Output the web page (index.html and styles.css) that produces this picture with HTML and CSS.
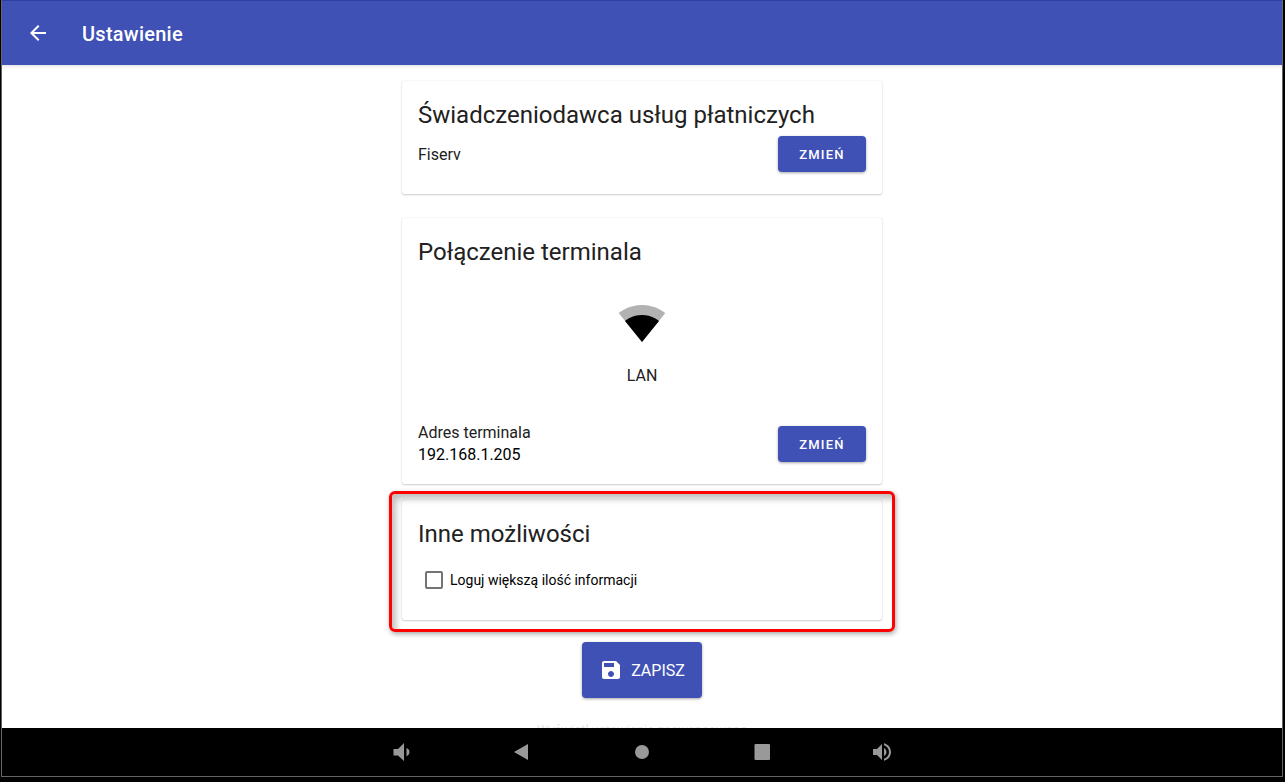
FILE: index.html
```html
<!DOCTYPE html>
<html lang="pl">
<head>
<meta charset="utf-8">
<meta name="viewport" content="width=device-width, initial-scale=1">
<title>Ustawienie</title>
<link rel="stylesheet" href="styles.css">
</head>
<body>
<div class="device">
  <header class="app-bar">
    <button class="icon-button" type="button" aria-label="Wstecz">
      <svg width="24" height="24" viewBox="0 0 24 24" fill="currentColor"><path d="M20 11H7.830l5.590-5.590L12 4l-8 8 8 8 1.410-1.410L7.830 13H20v-2z"/></svg>
    </button>
    <h1 class="app-title">Ustawienie</h1>
  </header>

  <main class="content">
    <form class="settings">
      <section class="card card-provider">
        <h2 class="card-title">Świadczeniodawca usług płatniczych</h2>
        <div class="row">
          <p class="body-text">Fiserv</p>
          <button class="button" type="button">ZMIEŃ</button>
        </div>
      </section>

      <section class="card card-connection">
        <h2 class="card-title">Połączenie terminala</h2>
        <div class="connection">
          <svg width="48" height="48" viewBox="0 0 48 48"><path fill="#b2b2b2" d="M24 43 47.300 14C46.400 13.300 37.500 6 24 6S1.600 13.300.700 14L24 43z"/><path fill="#000" d="M24 43 41 21.900C40.100 21.200 34 16 24 16S7.900 21.200 7 21.900L24 43z"/></svg>
          <p class="body-text">LAN</p>
        </div>
        <div class="row">
          <dl class="address">
            <dt class="address-label">Adres terminala</dt>
            <dd class="address-value">192.168.1.205</dd>
          </dl>
          <button class="button" type="button">ZMIEŃ</button>
        </div>
      </section>

      <div class="highlighted">
        <section class="card card-other">
          <h2 class="card-title">Inne możliwości</h2>
          <label class="check"><input class="check-box" type="checkbox">Loguj większą ilość informacji</label>
        </section>
        <div class="highlight"></div>
      </div>

      <button class="button save" type="button">
        <svg width="24" height="24" viewBox="0 0 24 24" fill="currentColor"><path d="M17 3H5c-1.110 0-2 .9-2 2v14c0 1.100.890 2 2 2h14c1.100 0 2-.9 2-2V7l-4-4zm-5 16c-1.660 0-3-1.340-3-3s1.340-3 3-3 3 1.340 3 3-1.340 3-3 3zm3-10H5V5h10v4z"/></svg>
        <span>ZAPISZ</span>
      </button>
      <a class="advanced" href="#advanced">Wyświetl ustawienia zaawansowane</a>
    </form>
  </main>

  <nav class="system-bar" aria-label="System">
    <button class="system-button" type="button" aria-label="Ciszej"><svg width="24" height="24" viewBox="0 0 24 24" fill="currentColor"><path d="M3.500 9v6.500H8l6 5.500V3L8 9H3.500zM16.500 8v8.200c1.900-.6 3-2.200 3-4.100s-1.100-3.500-3-4.100z"/></svg></button>
    <button class="system-button" type="button" aria-label="Wstecz"><svg width="24" height="24" viewBox="0 0 24 24" fill="currentColor"><path d="M4 12 18 4v16z"/></svg></button>
    <button class="system-button" type="button" aria-label="Ekran główny"><svg width="24" height="24" viewBox="0 0 24 24" fill="currentColor"><circle cx="12" cy="12" r="7"/></svg></button>
    <button class="system-button" type="button" aria-label="Ostatnie aplikacje"><svg width="24" height="24" viewBox="0 0 24 24" fill="currentColor"><rect x="4.500" y="4" width="15.500" height="16" rx="1"/></svg></button>
    <button class="system-button" type="button" aria-label="Głośniej"><svg width="24" height="24" viewBox="0 0 24 24" fill="currentColor"><path d="M3 9v6h4l5 5V4L7 9H3zm13.500 3c0-1.770-1.020-3.290-2.500-4.030v8.050c1.480-.730 2.500-2.250 2.500-4.020zM14 3.230v2.060c2.890.860 5 3.540 5 6.710s-2.110 5.850-5 6.710v2.060c4.010-.910 7-4.490 7-8.770s-2.990-7.860-7-8.770z"/></svg></button>
  </nav>
</div>
</body>
</html>
```
FILE: styles.css
```css
* {
  box-sizing: border-box;
}

body {
  margin: 0;
  background: #000;
  color: #212121;
  font-family: Roboto, "Noto Sans", sans-serif;
  font-size: 16px;
}

h1, h2, p, dl, dd {
  margin: 0;
  font-weight: 400;
}

button {
  border: 0;
  padding: 0;
  font-family: inherit;
  cursor: pointer;
}

svg {
  display: block;
}

.device {
  display: flex;
  flex-direction: column;
  height: calc(100vh - 5px);
  margin: 0 2px 0 1px;
  border: 1px solid #666;
  border-top: 0;
}

.app-bar {
  display: flex;
  flex: none;
  align-items: center;
  gap: 32px;
  height: 65px;
  padding: 0 24px;
  border-top: 1px solid #303f9f;
  background: #3f51b5;
  color: #fff;
}

.icon-button {
  background: none;
  color: inherit;
}

.app-title {
  padding-top: 2px;
  font-size: 20px;
  font-weight: 500;
  line-height: 24px;
  letter-spacing: 0.25px;
}

.content {
  flex: 1;
  min-height: 0;
  overflow: hidden;
  padding: 16px;
  background: #fff;
  box-shadow: inset 0 4px 4px -3px #ddd;
}

.settings {
  display: flex;
  flex-direction: column;
  align-items: center;
  max-width: 480px;
  margin: 0 auto;
}

.card {
  width: 100%;
  padding: 16px;
  border-radius: 2px;
  background: #fff;
  box-shadow: 0 1px 2px rgba(0, 0, 0, 0.18), 0 0 1px rgba(0, 0, 0, 0.2);
}

.card-title {
  font-size: 24px;
  line-height: 36px;
}

.row {
  display: flex;
  align-items: center;
  justify-content: space-between;
}

.body-text {
  padding-top: 2px;
  line-height: 24px;
}

.button {
  min-width: 88px;
  height: 36px;
  border-radius: 4px;
  background: #3f51b5;
  color: #fff;
  font-size: 13px;
  font-weight: 500;
  letter-spacing: 1.25px;
  box-shadow: 0 1px 3px rgba(0, 0, 0, 0.35);
}

.card-provider {
  margin-bottom: 24px;
  padding-bottom: 22px;
}

.card-provider .row {
  margin-top: 3px;
}

.card-connection {
  margin-bottom: 16px;
  padding-bottom: 18px;
}

.connection {
  display: flex;
  flex-direction: column;
  align-items: center;
  gap: 15px;
  margin: 29px 0 34px;
}

.address {
  line-height: 22px;
}

.address-value {
  color: #000;
}

.highlighted {
  position: relative;
  width: 100%;
  margin-bottom: 22px;
}

.card-other {
  padding-bottom: 24px;
}

.highlight {
  position: absolute;
  inset: -9px -13px -12px;
  border: 3px solid #f00;
  border-radius: 6px;
  box-shadow: 1px 2px 5px rgba(0, 0, 0, 0.35), inset 4px 5px 6px rgba(0, 0, 0, 0.25);
  pointer-events: none;
}

.check {
  display: flex;
  align-items: center;
  gap: 7px;
  height: 32px;
  margin-top: 12px;
  padding-left: 7px;
  color: #000;
  font-size: 14px;
}

.check-box {
  appearance: none;
  width: 18px;
  height: 18px;
  margin: 0;
  border: 2px solid #737373;
  border-radius: 2px;
}

.check-box:checked {
  border-color: #3f51b5;
  background: #3f51b5;
}

.save {
  display: flex;
  align-items: center;
  justify-content: center;
  gap: 8px;
  min-width: 120px;
  height: 56px;
  font-size: 16px;
  font-weight: 400;
  letter-spacing: 0;
}

.advanced {
  margin-top: 22px;
  color: #e6e6e6;
  font-size: 13px;
  line-height: 20px;
  text-decoration: none;
}

.system-bar {
  display: flex;
  flex: none;
  justify-content: center;
  gap: 96px;
  height: 48px;
  background: #000;
}

.system-button {
  background: none;
  color: #999;
}
```
